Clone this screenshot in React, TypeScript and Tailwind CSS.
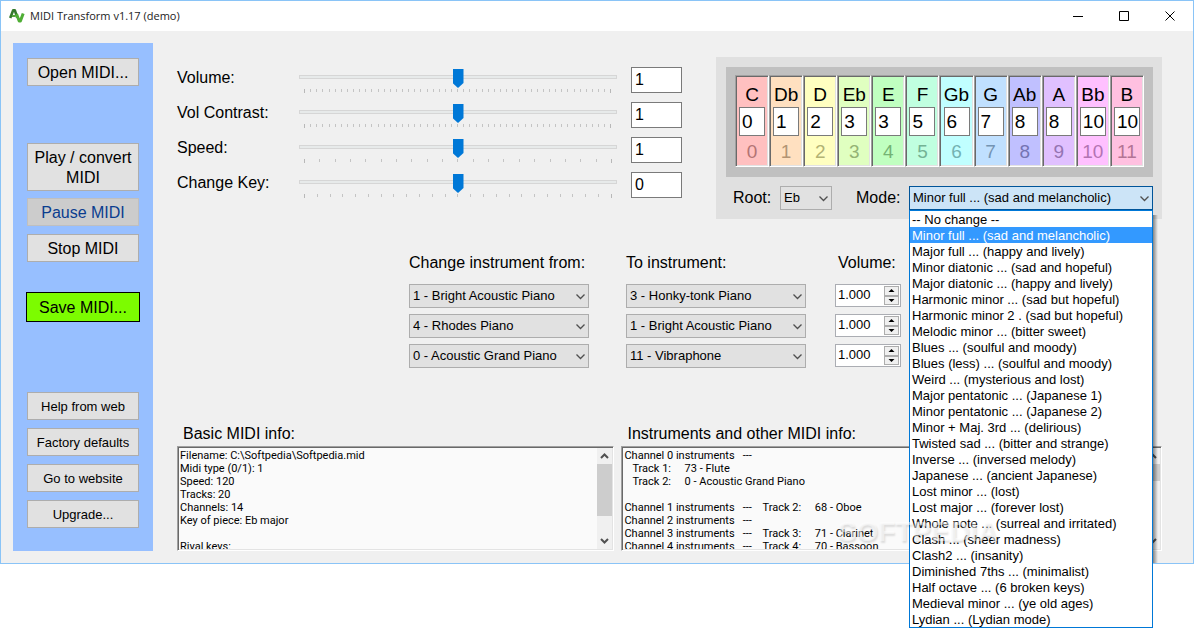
import { useState } from "react";

const MODES = [
  "-- No change --",
  "Minor full ... (sad and melancholic)",
  "Major full ... (happy and lively)",
  "Minor diatonic ... (sad and hopeful)",
  "Major diatonic ... (happy and lively)",
  "Harmonic minor ... (sad but hopeful)",
  "Harmonic minor 2 . (sad but hopeful)",
  "Melodic minor ... (bitter sweet)",
  "Blues ... (soulful and moody)",
  "Blues (less) ... (soulful and moody)",
  "Weird ... (mysterious and lost)",
  "Major pentatonic ... (Japanese 1)",
  "Minor pentatonic ... (Japanese 2)",
  "Minor + Maj. 3rd ... (delirious)",
  "Twisted sad ... (bitter and strange)",
  "Inverse ... (inversed melody)",
  "Japanese ... (ancient Japanese)",
  "Lost minor ... (lost)",
  "Lost major ... (forever lost)",
  "Whole note ... (surreal and irritated)",
  "Clash ... (sheer madness)",
  "Clash2 ... (insanity)",
  "Diminished 7ths ... (minimalist)",
  "Half octave ... (6 broken keys)",
  "Medieval minor ... (ye old ages)",
  "Lydian ... (Lydian mode)",
];

const NOTES = [
  { name: "C", value: "0", index: 0, tone: "bg-[#ffc0c0] text-[#b37474]" },
  { name: "Db", value: "1", index: 1, tone: "bg-[#ffe0c0] text-[#b39474]" },
  { name: "D", value: "2", index: 2, tone: "bg-[#ffffc0] text-[#b3b374]" },
  { name: "Eb", value: "3", index: 3, tone: "bg-[#e0ffc0] text-[#94b374]" },
  { name: "E", value: "3", index: 4, tone: "bg-[#c0ffc0] text-[#74b374]" },
  { name: "F", value: "5", index: 5, tone: "bg-[#c0ffe0] text-[#74b394]" },
  { name: "Gb", value: "6", index: 6, tone: "bg-[#c0ffff] text-[#74b3b3]" },
  { name: "G", value: "7", index: 7, tone: "bg-[#c0e0ff] text-[#7494b3]" },
  { name: "Ab", value: "8", index: 8, tone: "bg-[#c0c0ff] text-[#7474b3]" },
  { name: "A", value: "8", index: 9, tone: "bg-[#e0c0ff] text-[#9474b3]" },
  { name: "Bb", value: "10", index: 10, tone: "bg-[#ffc0ff] text-[#b374b3]" },
  { name: "B", value: "10", index: 11, tone: "bg-[#ffc0e0] text-[#b37494]" },
];

const SLIDERS = [
  { id: "volume", label: "Volume:", value: "1", steps: 50 },
  { id: "contrast", label: "Vol Contrast:", value: "1", steps: 50 },
  { id: "speed", label: "Speed:", value: "1", steps: 20 },
  { id: "key", label: "Change Key:", value: "0", steps: 24 },
];

const INSTRUMENTS = [
  "0 - Acoustic Grand Piano",
  "1 - Bright Acoustic Piano",
  "3 - Honky-tonk Piano",
  "4 - Rhodes Piano",
  "11 - Vibraphone",
];

const SWAPS = [
  { from: INSTRUMENTS[1], to: INSTRUMENTS[2] },
  { from: INSTRUMENTS[3], to: INSTRUMENTS[1] },
  { from: INSTRUMENTS[0], to: INSTRUMENTS[4] },
];

const BASIC_INFO = `Filename: C:\\Softpedia\\Softpedia.mid
Midi type (0/1): 1
Speed: 120
Tracks: 20
Channels: 14
Key of piece: Eb major

Rival keys:`;

const INSTRUMENT_INFO = `Channel 0 instruments   ---
   Track 1:     73 - Flute
   Track 2:     0 - Acoustic Grand Piano

Channel 1 instruments   ---    Track 2:     68 - Oboe
Channel 2 instruments   ---
Channel 3 instruments   ---    Track 3:     71 - Clarinet
Channel 4 instruments   ---    Track 4:     70 - Bassoon`;

const SUNKEN =
  "border border-t-[#a0a0a0] border-l-[#a0a0a0] border-r-white border-b-white";

function Chevron() {
  return (
    <svg
      className="pointer-events-none absolute top-2 right-1 h-2 w-[9px]"
      viewBox="0 0 9 8"
      fill="none"
      stroke="#505050"
      strokeWidth="1.3"
      aria-hidden="true"
    >
      <path d="M0.5 2.500 L4.5 6.500 L8.5 2.500" />
    </svg>
  );
}

function DropDown({ label, value, options }: { label: string; value: string; options: string[] }) {
  return (
    <div className="relative h-6">
      <select
        aria-label={label}
        defaultValue={value}
        className="block h-full w-full appearance-none rounded-none border border-[#adadad] bg-[#e1e1e1] pr-4 pl-[3px] text-[13px] text-black"
      >
        {options.map((o) => (
          <option key={o}>{o}</option>
        ))}
      </select>
      <Chevron />
    </div>
  );
}

function SideButton({ children, className = "h-7 text-[16px]" }: { children: string; className?: string }) {
  return (
    <button type="button" className={`border border-[#adadad] bg-[#e1e1e1] pt-px leading-5 ${className}`}>
      {children}
    </button>
  );
}

function SliderRow({ id, label, value, steps }: { id: string; label: string; value: string; steps: number }) {
  return (
    <div className="flex h-[26px] items-start">
      <label htmlFor={id} className="w-[122px] text-[16px] leading-[22px]">
        {label}
      </label>
      <div className="flex flex-1 flex-col">
        <input
          id={id}
          type="range"
          min={0}
          max={steps}
          defaultValue={steps / 2}
          className="h-5 w-full appearance-none bg-transparent [&::-webkit-slider-runnable-track]:h-1 [&::-webkit-slider-runnable-track]:border [&::-webkit-slider-runnable-track]:border-[#d6d6d6] [&::-webkit-slider-runnable-track]:bg-[#e7eaea] [&::-webkit-slider-thumb]:-mt-[7px] [&::-webkit-slider-thumb]:h-[19px] [&::-webkit-slider-thumb]:w-[11px] [&::-webkit-slider-thumb]:appearance-none [&::-webkit-slider-thumb]:bg-[#0078d7] [&::-webkit-slider-thumb]:[clip-path:polygon(0_0,100%_0,100%_74%,50%_100%,0_74%)]"
        />
        <div className="mt-[2px] flex justify-between px-[5px]" aria-hidden="true">
          {Array.from({ length: steps + 1 }, (_, i) => (
            <span
              key={i}
              className={i === 0 || i === steps ? "h-1 w-px bg-[#b8b8b8]" : "h-[3px] w-px bg-[#c4c4c4]"}
            />
          ))}
        </div>
      </div>
      <input
        aria-label={`${label} value`}
        defaultValue={value}
        className="ml-[14px] h-[26px] w-[51px] border border-[#7a7a7a] bg-white px-[3px] text-[16px]"
      />
    </div>
  );
}

function Spinner({ label }: { label: string }) {
  return (
    <div className="flex h-[23px] border border-[#abadb3] bg-white p-px">
      <input
        aria-label={label}
        defaultValue="1.000"
        className="h-[18px] w-0 flex-1 bg-transparent pl-px text-[13px] leading-[18px]"
      />
      <div className="flex w-[15px] flex-col">
        {["M2.500 5h6L5.500 2z", "M2.500 2h6L5.500 5z"].map((d, i) => (
          <button
            key={d}
            type="button"
            aria-label={i === 0 ? "Increase" : "Decrease"}
            className="flex flex-1 items-center justify-center border border-[#adadad] bg-[#f0f0f0]"
          >
            <svg className="h-[7px] w-[11px]" viewBox="0 0 11 7" aria-hidden="true">
              <path d={d} />
            </svg>
          </button>
        ))}
      </div>
    </div>
  );
}

function InfoBox({ id, title, text, thumb }: { id: string; title: string; text: string; thumb: string }) {
  return (
    <div>
      <label htmlFor={id} className="block pl-[6px] text-[16px] leading-[22px]">
        {title}
      </label>
      <div className={`mt-px flex h-[105px] bg-[#fafafa] shadow-[inset_1px_1px_#696969,inset_-1px_-1px_#e3e3e3] ${SUNKEN}`}>
        <textarea
          id={id}
          readOnly
          wrap="off"
          defaultValue={text}
          className="m-px h-[101px] flex-1 resize-none overflow-hidden bg-transparent pt-px pl-px font-[Roboto,sans-serif] text-[11px] leading-[13px]"
        />
        <div className="my-px mr-px flex w-[15px] flex-col items-center justify-between bg-[#f0f0f0]" aria-hidden="true">
          <div className="flex w-full flex-col items-center">
            <svg className="my-1 h-2 w-[9px]" viewBox="0 0 9 8" fill="none" stroke="#505050" strokeWidth="2">
              <path d="M1 6 L4.500 2.500 L8 6" />
            </svg>
            <div className={`w-full bg-[#cdcdcd] ${thumb}`} />
          </div>
          <svg className="my-1 h-2 w-[9px]" viewBox="0 0 9 8" fill="none" stroke="#505050" strokeWidth="2">
            <path d="M1 2 L4.500 5.500 L8 2" />
          </svg>
        </div>
      </div>
    </div>
  );
}

function ModePicker() {
  const [mode, setMode] = useState(MODES[1]);
  const [open, setOpen] = useState(true);
  return (
    <div className="relative h-6 flex-1">
      <select
        id="mode"
        value={mode}
        onChange={(e) => setMode(e.target.value)}
        onMouseDown={(e) => {
          e.preventDefault();
          setOpen(!open);
        }}
        className="block h-full w-full appearance-none rounded-none border border-[#005499] bg-[#cce4f7] pr-4 pl-[3px] text-[13px] text-black"
      >
        {MODES.map((m) => (
          <option key={m}>{m}</option>
        ))}
      </select>
      <Chevron />
      {open && (
        <div className="absolute top-6 left-0 z-10 w-full">
          <div className="absolute top-[5px] left-full h-[348px] w-[5px] bg-linear-to-r from-black/45 to-transparent" />
          <ul role="listbox" aria-label="Mode" className="border border-[#0078d7] bg-white">
            {MODES.map((m) => (
              <li
                key={m}
                role="option"
                aria-selected={m === mode}
                onClick={() => {
                  setMode(m);
                  setOpen(false);
                }}
                className={
                  m === mode
                    ? "h-4 bg-[#3399ff] pl-[2px] text-[13px] leading-[18px] whitespace-nowrap text-white"
                    : "h-4 pl-[2px] text-[13px] leading-[18px] whitespace-nowrap"
                }
              >
                {m}
              </li>
            ))}
          </ul>
        </div>
      )}
    </div>
  );
}

function TitleBar() {
  return (
    <header className="flex h-[30px] items-center bg-white">
      <svg className="ml-2 h-4 w-4" viewBox="0 0 16 16" fill="none" strokeLinejoin="round" aria-hidden="true">
        <path d="M1.200 10 L4.200 2.200 H5.800 L8.200 9.500" stroke="#347a2c" strokeWidth="2.600" />
        <path d="M3 8 H6.500" stroke="#54a83a" strokeWidth="2" />
        <path d="M7.500 6 L10.200 13 H11.400 L14.200 5.500" stroke="#4fae35" strokeWidth="3" />
      </svg>
      <h1 className="ml-[5px] flex-1 font-['Open_Sans',sans-serif] text-[11px] text-[#222]">MIDI Transform v1.17 (demo)</h1>
      {[
        { name: "Minimize", d: "M0 5.500H10" },
        { name: "Maximize", d: "M0.500 0.500H9.500V9.500H0.500Z" },
        { name: "Close", d: "M0.500 0.500L9.500 9.500M9.500 0.500L0.500 9.500" },
      ].map((b) => (
        <button key={b.name} type="button" aria-label={b.name} className="flex h-full w-[46px] items-center justify-center">
          <svg className="h-[10px] w-[10px]" viewBox="0 0 10 10" fill="none" stroke="#000" aria-hidden="true">
            <path d={b.d} />
          </svg>
        </button>
      ))}
    </header>
  );
}

export default function App() {
  return (
    <div className="min-h-screen bg-white">
      <div className="relative w-full border border-[#8ac4f7] bg-[#f0f0f0] font-['Liberation_Sans',Arial,sans-serif] text-black">
        <TitleBar />
        <div className="flex gap-6 py-3 pr-[31px] pl-3">
          <nav className="flex w-[140px] shrink-0 flex-col bg-[#97bfff] px-[14px] pt-[15px] pb-[23px]">
            <SideButton>Open MIDI...</SideButton>
            <div className="mt-[57px] flex flex-col gap-2">
              <SideButton className="h-12 text-[16px]">Play / convert MIDI</SideButton>
              <button type="button" disabled className="-mt-px h-7 border border-[#bfbfbf] bg-[#cccccc] pt-px text-[16px] leading-5 text-[#0a3d8f]">
                Pause MIDI
              </button>
              <SideButton>Stop MIDI</SideButton>
            </div>
            <button type="button" className="-mx-px mt-[30px] h-[30px] border border-black bg-[#7cfc00] pt-px text-[16px] leading-5">
              Save MIDI...
            </button>
            <div className="mt-[70px] flex flex-col gap-2">
              <SideButton className="h-7 text-[13px]">Help from web</SideButton>
              <SideButton className="h-7 text-[13px]">Factory defaults</SideButton>
              <SideButton className="h-7 text-[13px]">Go to website</SideButton>
              <SideButton className="h-7 text-[13px]">Upgrade...</SideButton>
            </div>
          </nav>

          <main className="min-w-0 flex-1 pt-[14px]">
            <div className="flex gap-[34px]">
              <section className="flex flex-1 flex-col gap-[9px] pt-[10px]">
                {SLIDERS.map((s) => (
                  <SliderRow key={s.id} {...s} />
                ))}
              </section>

              <section className="h-[162px] w-[446px] shrink-0 bg-[#e0e0e0] pt-[10px] pr-[9px] pl-[10px]">
                <div className="grid grid-cols-12 bg-[#c0c0c0] px-[9px] pt-2 pb-[10px]">
                  {NOTES.map((n) => (
                    <div
                      key={n.name}
                      className={`flex h-[92px] flex-col items-center text-[19px] shadow-[inset_1px_1px_#696969,inset_-1px_-1px_#e3e3e3] ${SUNKEN} ${n.tone}`}
                    >
                      <label htmlFor={`note-${n.name}`} className="mt-2 h-[23px] leading-[22px] text-black">
                        {n.name}
                      </label>
                      <input
                        id={`note-${n.name}`}
                        defaultValue={n.value}
                        className="h-[29px] w-[26px] border border-[#7a7a7a] bg-white pl-[2px] text-black"
                      />
                      <span className="mt-[5px] leading-[22px]">{n.index}</span>
                    </div>
                  ))}
                </div>
                <div className="mt-[9px] flex h-6 items-center pl-[7px]">
                  <span className="w-[47px] text-[16px]">Root:</span>
                  <div className="w-[52px]">
                    <DropDown label="Root" value="Eb" options={NOTES.map((n) => n.name)} />
                  </div>
                  <label htmlFor="mode" className="ml-6 w-[53px] text-[16px]">
                    Mode:
                  </label>
                  <ModePicker />
                </div>
              </section>
            </div>

            <section className="mt-[34px] grid grid-cols-[180px_180px_66px] gap-y-[6px] pl-[232px]">
              <div className="contents text-[16px] leading-5">
                <h2 className="mb-[5px] whitespace-nowrap">Change instrument from:</h2>
                <h2 className="ml-[37px] whitespace-nowrap">To instrument:</h2>
                <h2 className="ml-[69px] whitespace-nowrap">Volume:</h2>
              </div>
              {SWAPS.map((s, i) => (
                <div key={i} className="contents">
                  <DropDown label={`Change instrument ${i + 1} from`} value={s.from} options={INSTRUMENTS} />
                  <div className="-mr-[37px] ml-[37px]">
                    <DropDown label={`To instrument ${i + 1}`} value={s.to} options={INSTRUMENTS} />
                  </div>
                  <div className="-mr-[66px] ml-[66px]">
                    <Spinner label={`Volume ${i + 1}`} />
                  </div>
                </div>
              ))}
            </section>

            <section className="mt-[55px] grid grid-cols-[437fr_540fr] gap-[7px]">
              <InfoBox id="basic" title="Basic MIDI info:" text={BASIC_INFO} thumb="h-[52px]" />
              <InfoBox id="other" title="Instruments and other MIDI info:" text={INSTRUMENT_INFO} thumb="h-[17px]" />
            </section>
          </main>
        </div>
        <div
          className="pointer-events-none absolute right-[195px] bottom-[15px] z-20 text-[28px] leading-8 font-bold text-white/50 [text-shadow:1px_2px_2px_rgba(0,0,0,0.12)]"
          aria-hidden="true"
        >
          SOFTPEDIA
        </div>
      </div>
    </div>
  );
}
